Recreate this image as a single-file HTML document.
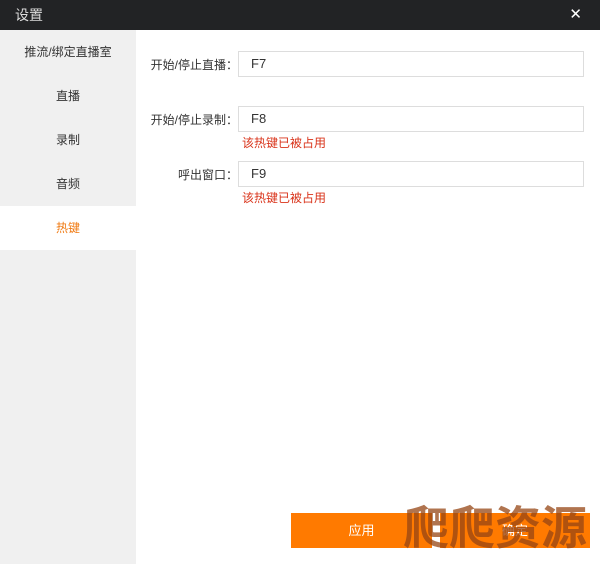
<!DOCTYPE html>
<html><head><meta charset="utf-8"><style>
*{margin:0;padding:0;box-sizing:border-box}
body{width:600px;height:564px;overflow:hidden;background:#fff;font-family:"Liberation Sans","Noto Sans CJK SC",sans-serif;font-size:12px;color:#333;position:relative}
.title{position:absolute;left:0;top:0;width:600px;height:30px;background:#222325;color:#ddd;font-size:14px;line-height:30px;padding-left:15px}
.close{position:absolute;right:18px;top:0;color:#fff;font-size:15px}
.side{position:absolute;left:0;top:30px;width:136px;height:534px;background:#f0f0f0}
.it{height:44px;line-height:44px;text-align:center;color:#333}
.it.a{background:#fff;color:#f07a12}
.lbl{position:absolute;width:100px;text-align:right;left:138px;color:#333}
.inp{position:absolute;left:238px;width:346px;height:26px;border:1px solid #ddd;line-height:24px;padding-left:12px;color:#333;font-size:13px}
.err{position:absolute;left:242px;color:#d9331a}
.btn{position:absolute;top:513px;height:35px;background:#ff7a00;color:#fff;font-size:13px;line-height:35px;text-align:center}
.wm{position:absolute;left:403px;top:500px;font-size:46px;line-height:56px;font-weight:bold;color:rgba(150,70,20,0.75);letter-spacing:0px}
</style></head><body>
<div class="title">设置<span class="close">✕</span></div>
<div class="side">
<div class="it">推流/绑定直播室</div>
<div class="it">直播</div>
<div class="it">录制</div>
<div class="it">音频</div>
<div class="it a">热键</div>
</div>
<div class="lbl" style="top:56px">开始/停止直播：</div>
<div class="inp" style="top:51px">F7</div>
<div class="lbl" style="top:111px">开始/停止录制：</div>
<div class="inp" style="top:106px">F8</div>
<div class="err" style="top:134px">该热键已被占用</div>
<div class="lbl" style="top:166px">呼出窗口：</div>
<div class="inp" style="top:161px">F9</div>
<div class="err" style="top:189px">该热键已被占用</div>
<div class="btn" style="left:291px;width:141px">应用</div>
<div class="btn" style="left:440px;width:150px">确定</div>
<div class="wm">爬爬资源</div>
</body></html>
